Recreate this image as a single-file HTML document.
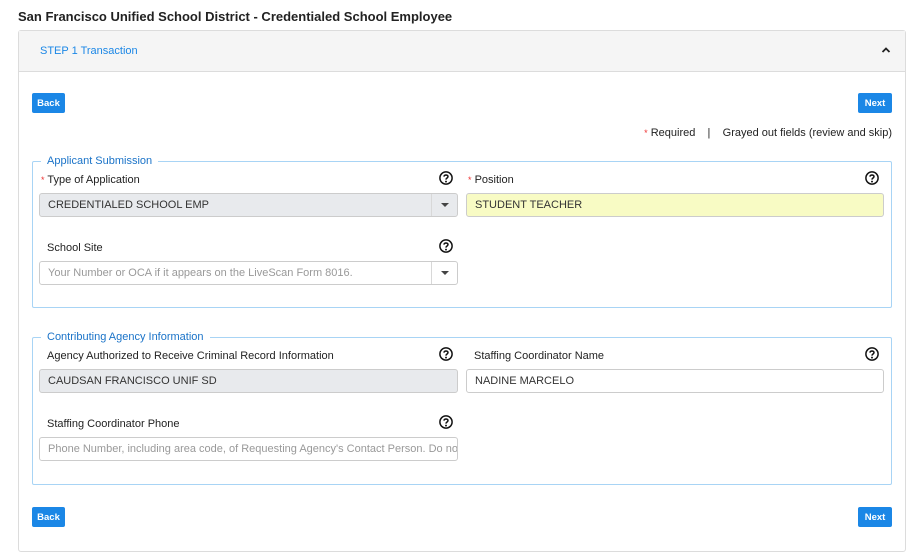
<!DOCTYPE html>
<html><head><meta charset="utf-8"><style>
*{box-sizing:border-box;margin:0;padding:0}
body{width:915px;height:556px;background:#fff;font-family:"Liberation Sans",sans-serif;color:#212529;position:relative;overflow:hidden;font-size:11px}
.a{position:absolute}
.title{left:18px;top:9px;font-size:13px;font-weight:bold;color:#222}
.card{left:18px;top:30px;width:888px;height:522px;border:1px solid #dcdcdc;border-radius:3px}
.hdr{left:19px;top:31px;width:886px;height:41px;background:#f5f5f5;border-bottom:1px solid #dcdcdc}
.btn{background:#1b87e6;color:#fff;font-size:9.5px;font-weight:bold;border-radius:2px;height:20px;display:flex;align-items:center;justify-content:center;padding-top:1px}
.fs{border:1px solid #a8d4f5;border-radius:2px}
.lg{background:#fff;color:#1a73c8;font-size:11px;padding:0 6px;height:13px;line-height:13px}
.lab{font-size:11px;color:#222}
.req{color:#e33;font-size:9px}
.inp{height:24px;border:1px solid #ccc;border-radius:3px;font-size:11px;line-height:23px;padding-left:8px;color:#333;white-space:nowrap;overflow:hidden}
.gray{background:#e8eaed}
.ph{color:#999}
.dd{position:absolute;right:0;top:0;width:26px;height:22px;border-left:1px solid #d8d8d8}
.dd:after{content:"";position:absolute;left:9px;top:9px;border-left:4.5px solid transparent;border-right:4.5px solid transparent;border-top:4.5px solid #444}
.q{width:14px;height:14px}
</style></head><body>
<div class="a title">San Francisco Unified School District - Credentialed School Employee</div>
<div class="a card"></div>
<div class="a hdr"></div>
<div class="a" style="left:40px;top:45px;color:#1b87e6;font-size:11px">STEP 1 Transaction</div>
<svg class="a" style="left:881px;top:46px" width="10" height="8" viewBox="0 0 10 8"><path d="M1.5 6 L5 2.5 L8.5 6" fill="none" stroke="#222" stroke-width="1.8"/></svg>

<div class="a btn" style="left:32px;top:93px;width:33px">Back</div>
<div class="a btn" style="left:858px;top:93px;width:34px">Next</div>
<div class="a lab" style="right:23px;top:127px;white-space:nowrap"><span class="req">*</span> Required &nbsp;&nbsp;&nbsp;| &nbsp;&nbsp;&nbsp;Grayed out fields (review and skip)</div>

<div class="a fs" style="left:32px;top:161px;width:860px;height:147px"></div>
<div class="a lg" style="left:41px;top:155px">Applicant Submission</div>
<div class="a lab" style="left:41px;top:174px"><span class="req">*</span> Type of Application</div>
<div class="a lab" style="left:468px;top:174px"><span class="req">*</span> Position</div>
<div class="a inp gray" style="left:39px;top:193px;width:419px">CREDENTIALED SCHOOL EMP<div class="dd"></div></div>
<div class="a inp" style="left:466px;top:193px;width:418px;background:#f8fbc4">STUDENT TEACHER</div>
<div class="a lab" style="left:47px;top:242px">School Site</div>
<div class="a inp ph" style="left:39px;top:261px;width:419px">Your Number or OCA if it appears on the LiveScan Form 8016.<div class="dd"></div></div>

<div class="a fs" style="left:32px;top:337px;width:860px;height:148px"></div>
<div class="a lg" style="left:41px;top:331px">Contributing Agency Information</div>
<div class="a lab" style="left:47px;top:350px">Agency Authorized to Receive Criminal Record Information</div>
<div class="a lab" style="left:474px;top:350px">Staffing Coordinator Name</div>
<div class="a inp gray" style="left:39px;top:369px;width:419px">CAUDSAN FRANCISCO UNIF SD</div>
<div class="a inp" style="left:466px;top:369px;width:418px">NADINE MARCELO</div>
<div class="a lab" style="left:47px;top:418px">Staffing Coordinator Phone</div>
<div class="a inp ph" style="left:39px;top:437px;width:419px">Phone Number, including area code, of Requesting Agency's Contact Person. Do not</div>

<div class="a btn" style="left:32px;top:507px;width:33px">Back</div>
<div class="a btn" style="left:858px;top:507px;width:34px">Next</div>

<svg width="0" height="0" style="position:absolute"><defs><symbol id="q" viewBox="0 0 14 14"><circle cx="7" cy="7" r="6.1" fill="none" stroke="#111" stroke-width="1.5"/><path d="M5 5.6 C5 3.4 9 3.4 9 5.6 C9 7 7 7 7 8.6" fill="none" stroke="#111" stroke-width="1.5"/><circle cx="7" cy="10.6" r="0.95" fill="#111"/></symbol></defs></svg>
<svg class="a q" style="left:439px;top:171px"><use href="#q"/></svg>
<svg class="a q" style="left:865px;top:171px"><use href="#q"/></svg>
<svg class="a q" style="left:439px;top:239px"><use href="#q"/></svg>
<svg class="a q" style="left:439px;top:347px"><use href="#q"/></svg>
<svg class="a q" style="left:865px;top:347px"><use href="#q"/></svg>
<svg class="a q" style="left:439px;top:415px"><use href="#q"/></svg>
</body></html>
